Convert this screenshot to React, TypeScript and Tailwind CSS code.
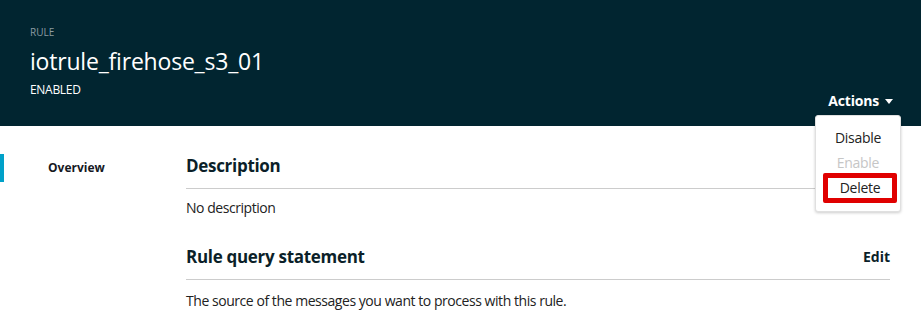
const font = { fontFamily: '"Open Sans", "Noto Sans", sans-serif' }

export default function App() {
  return (
    <div className="relative h-[313px] w-[921px] overflow-hidden bg-white" style={font}>
      <header className="relative h-[126px] bg-[#012530] px-[30px] pt-[24px]">
        <p className="text-[10px] leading-[16px] text-[#8b9ba1]">RULE</p>
        <h1 className="mt-[5px] text-[23px] leading-[32px] tracking-[-0.2px] text-white">iotrule_firehose_s3_01</h1>
        <p className="mt-[4px] text-[12px] leading-[18px] tracking-[-0.3px] text-white">ENABLED</p>
        <button className="absolute right-[28px] top-[91px] flex items-center gap-[6px] text-[14px] font-bold leading-[20px] tracking-[-0.2px] text-white">
          Actions
          <svg width="8" height="5" viewBox="0 0 8 5">
            <path d="M0 0h8L4 5z" fill="#fff" />
          </svg>
        </button>
      </header>

      <div className="flex pt-[28px]">
        <nav className="w-[186px] shrink-0">
          <div className="border-l-[4px] border-[#00a1c9] py-[4px] pl-[44px] text-[12px] font-bold leading-[20px] text-[#16191f]">
            Overview
          </div>
        </nav>
        <main className="flex-1 pr-[31px] text-[#16191f]">
          <section>
            <h2 className="pb-[10px] text-[17px] font-bold leading-[24px] tracking-[-0.3px] text-[#0b1f29]">Description</h2>
            <div className="border-t border-[#cccccc]" />
            <p className="pt-[9px] text-[14px] leading-[20px] tracking-[-0.45px] text-[#222]">No description</p>
          </section>
          <section className="mt-[27px]">
            <div className="flex items-center justify-between pb-[10px]">
              <h2 className="text-[17px] font-bold leading-[24px] tracking-[-0.3px] text-[#0b1f29]">Rule query statement</h2>
              <span className="text-[14px] font-bold leading-[20px] text-[#0b1f29]">Edit</span>
            </div>
            <div className="border-t border-[#cccccc]" />
            <p className="pt-[11px] text-[14px] leading-[20px] tracking-[-0.45px] text-[#222]">
              The source of the messages you want to process with this rule.
            </p>
          </section>
        </main>
      </div>

      <div className="absolute left-[815px] top-[115px] flex h-[97px] w-[86px] flex-col items-center rounded-[3px] border border-[#e0e0e0] bg-white pt-[12px] shadow-[0_1px_3px_rgba(0,0,0,0.2)]">
        <span className="text-[14px] leading-[20px] tracking-[-0.3px] text-[#222]">Disable</span>
        <span className="mt-[5px] text-[14px] leading-[20px] tracking-[-0.3px] text-[#c6c6c6]">Enable</span>
        <span className="ml-[7px] flex h-[30px] w-[74px] items-center justify-center self-start rounded-[2px] border-[5px] border-[#e00000] text-[14px] leading-[20px] tracking-[-0.3px] text-[#222]">
          Delete
        </span>
      </div>
    </div>
  )
}
